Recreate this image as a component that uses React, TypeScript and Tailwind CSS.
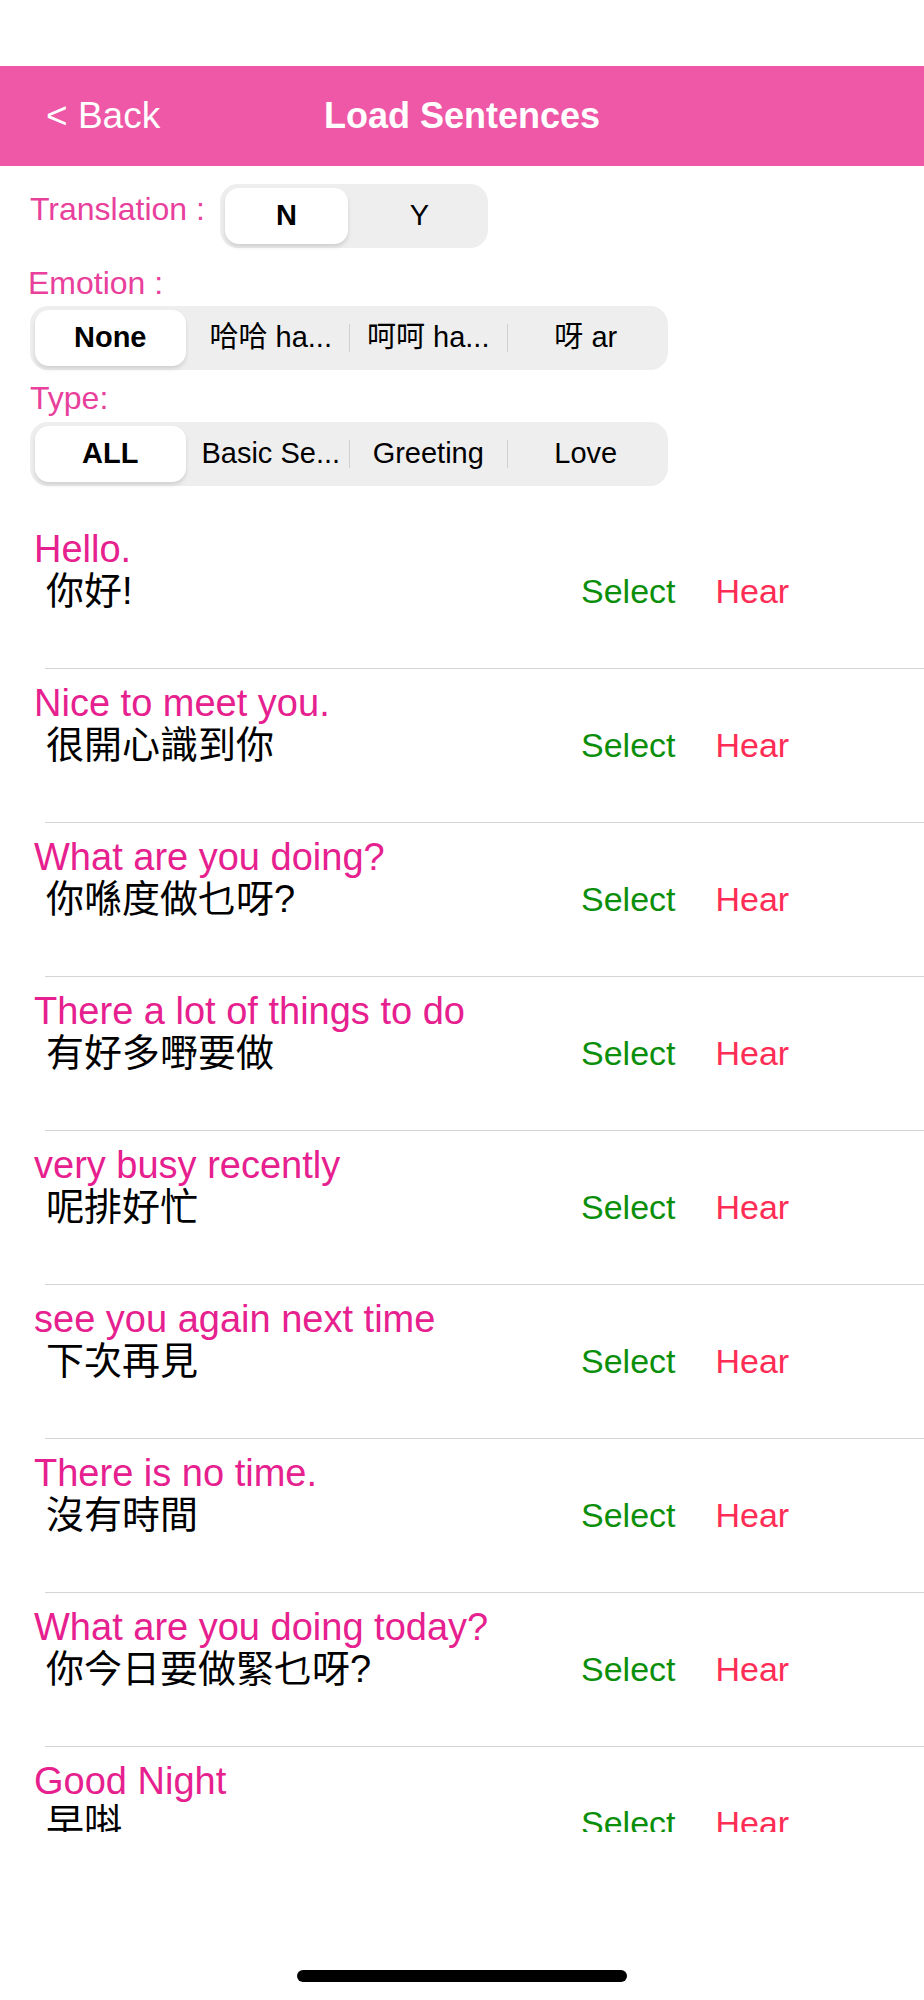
import { useState } from "react";

const sentences = [
  { en: "Hello.", zh: "你好!" },
  { en: "Nice to meet you.", zh: "很開心識到你" },
  { en: "What are you doing?", zh: "你喺度做乜呀?" },
  { en: "There a lot of things to do", zh: "有好多嘢要做" },
  { en: "very busy recently", zh: "呢排好忙" },
  { en: "see you again next time", zh: "下次再見" },
  { en: "There is no time.", zh: "沒有時間" },
  { en: "What are you doing today?", zh: "你今日要做緊乜呀?" },
  { en: "Good Night", zh: "早唞" },
];

const font = {
  fontFamily: '"Liberation Sans", "Noto Sans CJK TC", sans-serif',
};

function Segmented({
  items,
  selected,
  onChange,
  className,
}: {
  items: string[];
  selected: number;
  onChange: (i: number) => void;
  className: string;
}) {
  return (
    <div className={`flex items-stretch bg-[#eeeeef] rounded-[18px] p-[4px] ${className}`}>
      {items.map((label, i) => {
        const active = i === selected;
        // divider only between two unselected neighbours
        const showDivider = i > 0 && i !== selected && i - 1 !== selected;
        return (
          <div key={label} className="flex-1 flex items-center min-w-0">
            <div
              className={`w-px h-[28px] ${showDivider ? "bg-[#cfcfd4]" : "bg-transparent"}`}
            />
            <button
              onClick={() => onChange(i)}
              className={`flex-1 h-full flex items-center justify-center text-[29px] text-black whitespace-nowrap ${
                active
                  ? "mr-[6px] bg-white rounded-[14px] font-semibold shadow-[0_3px_4px_rgba(0,0,0,0.12)]"
                  : ""
              }`}
            >
              {label}
            </button>
          </div>
        );
      })}
    </div>
  );
}

export default function App() {
  const [translation, setTranslation] = useState(0);
  const [emotion, setEmotion] = useState(0);
  const [type, setType] = useState(0);

  return (
    <div className="w-[924px] h-[2000px] bg-white flex flex-col overflow-hidden" style={font}>
      {/* status bar space */}
      <div className="h-[66px]" />

      {/* Nav bar */}
      <div className="h-[100px] bg-[#ee58a7] grid grid-cols-[1fr_auto_1fr] items-center text-white">
        <button className="justify-self-start pl-[46px] text-[37px]">&lt; Back</button>
        <div className="text-[36px] font-bold">Load Sentences</div>
        <div />
      </div>

      {/* Filters */}
      <div className="flex items-start mt-[18px]">
        <span className="pl-[30px] mt-[7px] w-[220px] text-[32px] leading-[36px] text-[#e8409b]">
          Translation :
        </span>
        <Segmented
          items={["N", "Y"]}
          selected={translation}
          onChange={setTranslation}
          className="w-[268px] h-[64px]"
        />
      </div>

      <div className="pl-[28px] mt-[17px] text-[32px] leading-[36px] text-[#e8409b]">Emotion :</div>
      <Segmented
        items={["None", "哈哈 ha...", "呵呵 ha...", "呀 ar"]}
        selected={emotion}
        onChange={setEmotion}
        className="ml-[30px] mt-[5px] w-[638px] h-[64px]"
      />

      <div className="pl-[30px] mt-[10px] text-[32px] leading-[36px] text-[#e8409b]">Type:</div>
      <Segmented
        items={["ALL", "Basic Se...", "Greeting", "Love"]}
        selected={type}
        onChange={setType}
        className="ml-[30px] mt-[6px] w-[638px] h-[64px]"
      />

      {/* Sentence list */}
      <div className="mt-[29px] h-[1317px] overflow-hidden">
        {sentences.map((s) => (
          <div key={s.en}>
            <div className="h-[153px] flex items-center">
              <div className="w-[581px] self-start pt-[13px] pl-[34px]">
                <div className="text-[38px] leading-[42px] text-[#e6208e] whitespace-nowrap">{s.en}</div>
                <div className="pl-[12px] text-[38px] leading-[42px] text-black">{s.zh}</div>
              </div>
              <button className="text-[34px] text-[#0b8f0b]">Select</button>
              <button className="ml-[40px] text-[34px] text-[#ff2d55]">Hear</button>
            </div>
            <div className="ml-[45px] h-px bg-[#d4d4d8]" />
          </div>
        ))}
      </div>

      {/* home indicator */}
      <div className="mt-[138px] mx-auto w-[330px] h-[12px] rounded-full bg-black" />
    </div>
  );
}
